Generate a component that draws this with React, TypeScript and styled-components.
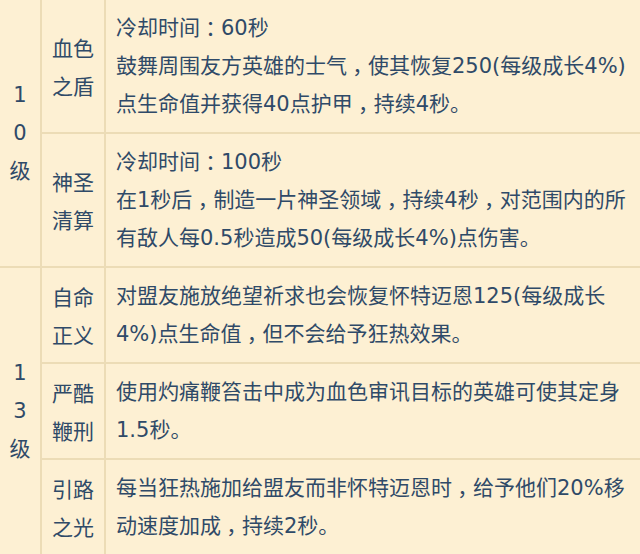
import styled, { createGlobalStyle } from 'styled-components'

const GlobalStyle = createGlobalStyle`
	* {
		box-sizing: border-box;
	}
	body {
		margin: 0;
		background: #fdf0d3;
		overflow: hidden;
	}
`

const Table = styled.table`
	width: 100%;
	table-layout: fixed;
	border-collapse: separate;
	border-spacing: 0;
	background: #fdf0d3;
	font-family: 'DejaVu Sans', 'Noto Sans CJK SC', sans-serif;
	font-size: 21px;
	line-height: 38px;
	color: #2f4a68;
`

const Cell = styled.td`
	padding: 9px 10px;
	vertical-align: middle;
	border-bottom: 2px solid #ecdcb6;
`

const LevelCell = styled(Cell)`
	width: 42px;
	padding: 0;
	text-align: center;
	border-right: 2px solid #ecdcb6;
`

const NameCell = styled(Cell)`
	width: 64px;
	border-right: 2px solid #ecdcb6;
	font-family: 'Noto Sans CJK SC', sans-serif;
`

const Line = styled.span`
	display: block;
	white-space: nowrap;
`

// full-width comma / colon drawn centred in their box, as in the source
const Punct = styled.span`
	display: inline-block;
	width: 1em;
	line-height: 1;
	text-align: center;
	font-family: 'Noto Sans CJK SC', sans-serif;
	font-feature-settings: 'halt' 1;
`

type Skill = { name: string[]; lines: string[] }
type Group = { level: string[]; skills: Skill[] }

const groups: Group[] = [
	{
		level: ['1', '0', '级'],
		skills: [
			{
				name: ['血色', '之盾'],
				lines: ['冷却时间：60秒', '鼓舞周围友方英雄的士气，使其恢复250(每级成长4%)', '点生命值并获得40点护甲，持续4秒。'],
			},
			{
				name: ['神圣', '清算'],
				lines: ['冷却时间：100秒', '在1秒后，制造一片神圣领域，持续4秒，对范围内的所', '有敌人每0.5秒造成50(每级成长4%)点伤害。'],
			},
		],
	},
	{
		level: ['1', '3', '级'],
		skills: [
			{
				name: ['自命', '正义'],
				lines: ['对盟友施放绝望祈求也会恢复怀特迈恩125(每级成长', '4%)点生命值，但不会给予狂热效果。'],
			},
			{
				name: ['严酷', '鞭刑'],
				lines: ['使用灼痛鞭笞击中成为血色审讯目标的英雄可使其定身', '1.5秒。'],
			},
			{
				name: ['引路', '之光'],
				lines: ['每当狂热施加给盟友而非怀特迈恩时，给予他们20%移', '动速度加成，持续2秒。'],
			},
		],
	},
]

function renderLine(text: string) {
	return text.split(/([，：])/).map((part, i) =>
		part === '，' || part === '：' ? <Punct key={i}>{part}</Punct> : part
	)
}

const App = () => {
	return (
		<>
			<GlobalStyle />
			<Table>
				<tbody>
					{groups.map((group) =>
						group.skills.map((skill, i) => (
							<tr key={group.level.join('') + i}>
								{i === 0 && (
									<LevelCell rowSpan={group.skills.length}>
										{group.level.map((l) => (
											<Line key={l}>{l}</Line>
										))}
									</LevelCell>
								)}
								<NameCell>
									{skill.name.map((n) => (
										<Line key={n}>{n}</Line>
									))}
								</NameCell>
								<Cell>
									{skill.lines.map((line) => (
										<Line key={line}>{renderLine(line)}</Line>
									))}
								</Cell>
							</tr>
						))
					)}
				</tbody>
			</Table>
		</>
	)
}

export default App
